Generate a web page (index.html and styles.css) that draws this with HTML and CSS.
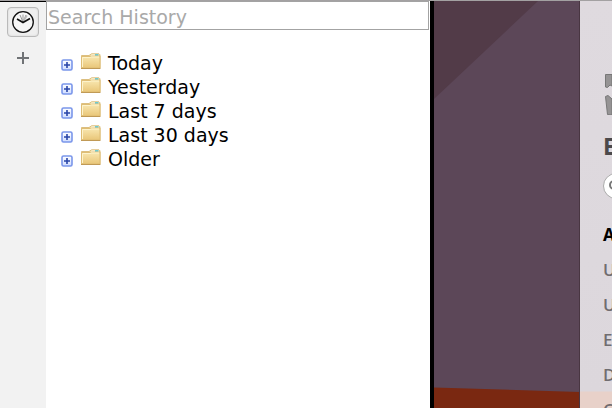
FILE: index.html
```html
<!DOCTYPE html>
<html lang="en">
<head>
<meta charset="utf-8">
<title>History</title>
<link rel="stylesheet" href="styles.css">
</head>
<body>
<svg class="defs" aria-hidden="true">
  <defs>
    <linearGradient id="paper" x1="0" y1="0" x2="0" y2="1"><stop offset="0" stop-color="#f9e8b2"/><stop offset="1" stop-color="#e9c678"/></linearGradient>
    <linearGradient id="box" x1="0" y1="0" x2="0" y2="1"><stop offset="0" stop-color="#ffffff"/><stop offset="1" stop-color="#cfdcff"/></linearGradient>
    <symbol id="folder" viewBox="0 0 20 17">
      <path d="M.5 15V2.500H8L10.500.800H18l1 1V15z" fill="#f3dc98" stroke="#dcbf80"/>
      <path d="M10.500 1.500H18v1.500H9.500z" fill="#fffdf0"/>
      <path d="M14 1.300h3.500v1.400H14z" fill="#36bcd4"/>
      <path d="M.5 3.500H9l1.500-.500H19V15H.5z" fill="url(#paper)" stroke="#dfbd75"/>
      <path d="M1.500 14V4.500H9l1.500-.500H18" fill="none" stroke="#fdf3cb"/>
      <path d="M0 15.500h19.500" stroke="#c09a56"/>
    </symbol>
    <symbol id="expand" viewBox="0 0 12 12">
      <rect x="1" y="1" width="10" height="10" rx="1.500" fill="url(#box)" stroke="#7a96ea" stroke-width="1.600"/>
      <path d="M6 3v6M3 6h6" stroke="#2945a8" stroke-width="1.600"/>
    </symbol>
  </defs>
</svg>
<div class="window">
  <nav class="rail">
    <button class="rail-button active" type="button" aria-label="History">
      <svg width="24" height="24" viewBox="0 0 24 24" fill="none">
        <circle cx="12" cy="12" r="10.300" fill="#f6f6f6" stroke="#111" stroke-width="1.300"/>
        <path d="M12 12V4.500M12 12L9 5M12 12L15 5" stroke="#999"/>
        <path d="M12 12L16 5.500" stroke="#bbb" stroke-width="1.500"/>
        <path d="M6 9l6 3.500L19 8.500" stroke="#111" stroke-width="1.600"/>
      </svg>
    </button>
    <button class="rail-button" type="button" aria-label="Add">
      <svg width="12" height="12" viewBox="0 0 12 12"><path d="M6 0v12M0 6h12" stroke="#707376" stroke-width="2"/></svg>
    </button>
  </nav>
  <section class="history">
    <input class="history-search" type="search" placeholder="Search History" aria-label="Search History">
    <ul class="tree">
      <li><button class="toggle" type="button" aria-label="Expand Today"><svg><use href="#expand"/></svg></button><svg class="folder"><use href="#folder"/></svg><span>Today</span></li>
      <li><button class="toggle" type="button" aria-label="Expand Yesterday"><svg><use href="#expand"/></svg></button><svg class="folder"><use href="#folder"/></svg><span>Yesterday</span></li>
      <li><button class="toggle" type="button" aria-label="Expand Last 7 days"><svg><use href="#expand"/></svg></button><svg class="folder"><use href="#folder"/></svg><span>Last 7 days</span></li>
      <li><button class="toggle" type="button" aria-label="Expand Last 30 days"><svg><use href="#expand"/></svg></button><svg class="folder"><use href="#folder"/></svg><span>Last 30 days</span></li>
      <li><button class="toggle" type="button" aria-label="Expand Older"><svg><use href="#expand"/></svg></button><svg class="folder"><use href="#folder"/></svg><span>Older</span></li>
    </ul>
  </section>
  <main class="page">
    <svg class="wallpaper" viewBox="0 0 178 407" preserveAspectRatio="none" aria-hidden="true">
      <path d="M0 0h178v407H0z" fill="#5c4758"/>
      <path d="M0 0h104L0 98z" fill="#523b48"/>
      <path d="M0 386.500L146 391h32v16H0z" fill="#7a2811"/>
    </svg>
    <aside class="speed-panel">
      <svg class="mark" viewBox="0 0 9 42" aria-hidden="true">
        <path d="M2.500 1.500H9V13L7 12 4.500 14.500 2.500 14z" fill="#959394" stroke="#777"/>
        <path d="M2.500 23.500L5 22.500 9 26V42L4.500 41.500z" fill="#959394" stroke="#777"/>
      </svg>
      <h1>E</h1>
      <div class="search-pill"><svg width="12" height="12" viewBox="0 0 12 12"><circle cx="6" cy="5" r="4" fill="none" stroke="#777" stroke-width="2"/></svg></div>
      <ul class="links">
        <li><a class="current" href="#a">A</a></li>
        <li><a href="#u">U</a></li>
        <li><a href="#v">U</a></li>
        <li><a href="#e">E</a></li>
        <li><a href="#d">D</a></li>
        <li><a href="#c">C</a></li>
      </ul>
    </aside>
  </main>
</div>
</body>
</html>
```
FILE: styles.css
```css
* { box-sizing: border-box; }

body {
  margin: 0;
  font-family: "DejaVu Sans", sans-serif;
  font-size: 19px;
  color: #000;
}

button {
  padding: 0;
  border: 0;
  background: none;
}

ul {
  margin: 0;
  padding: 0;
  list-style: none;
}

.defs {
  position: absolute;
  width: 0;
  height: 0;
}

.window {
  display: flex;
  height: 100vh;
  overflow: hidden;
  border-top: 1px solid #a3a1a2;
}

.rail {
  display: flex;
  flex: none;
  flex-direction: column;
  align-items: center;
  gap: 6px;
  width: 46px;
  padding-top: 5px;
  border-top: 1px solid #000;
  background: #f2f2f2;
}

.rail-button {
  display: flex;
  align-items: center;
  justify-content: center;
  width: 32px;
  height: 30px;
  border: 1px solid transparent;
  border-radius: 4px;
}

.rail-button.active {
  border-color: #bababa;
  background: #efefef;
  box-shadow: inset 0 0 2px #ccc;
}

.history {
  display: flex;
  flex: none;
  flex-direction: column;
  width: 388px;
  padding-right: 1px;
  border-right: 4px solid #000;
  background: #fff;
}

.history-search {
  height: 29px;
  padding: 3px 1px 1px;
  border: 1px solid #a3a3a3;
  border-radius: 0;
  outline: 0;
  background: #fff;
  font: inherit;
  appearance: none;
}

.history-search::placeholder {
  color: #a9a9a9;
  opacity: 1;
}

.tree {
  padding: 21px 15px;
}

.tree li {
  display: flex;
  align-items: center;
  height: 24px;
  line-height: 24px;
}

.toggle,
.toggle svg {
  display: block;
  width: 12px;
  height: 12px;
}

.toggle {
  margin-top: 3px;
}

.folder {
  width: 20px;
  height: 17px;
  margin: 0 7px 4px 8px;
}

.page {
  display: flex;
  position: relative;
  flex: 1;
  justify-content: flex-end;
  min-width: 0;
  overflow: hidden;
}

.wallpaper {
  position: absolute;
  inset: 0;
  width: 100%;
  height: 100%;
}

.speed-panel {
  position: relative;
  width: 33px;
  padding: 72px 0 0 23px;
  overflow: hidden;
  border-left: 1px solid #493642;
  background: linear-gradient(#dfdadf, #dcd7dc 390px, #e8d1c9 391px);
  font-family: "Open Sans", sans-serif;
  white-space: nowrap;
}

.mark {
  display: block;
  width: 9px;
  height: 42px;
}

.speed-panel h1 {
  margin: 16px 0 12px;
  color: #4b494b;
  font-size: 23px;
  line-height: 30px;
}

.search-pill {
  display: flex;
  align-items: center;
  width: 120px;
  height: 26px;
  padding-left: 4px;
  border: 1px solid #aaa;
  border-radius: 13px;
  background: #fff;
}

.links {
  padding-top: 18px;
}

.links li {
  height: 35px;
}

.links a {
  color: #706d70;
  font-size: 17px;
  font-weight: 600;
  line-height: 35px;
  text-decoration: none;
}

.links .current {
  color: #000;
  font-weight: 700;
}
```
